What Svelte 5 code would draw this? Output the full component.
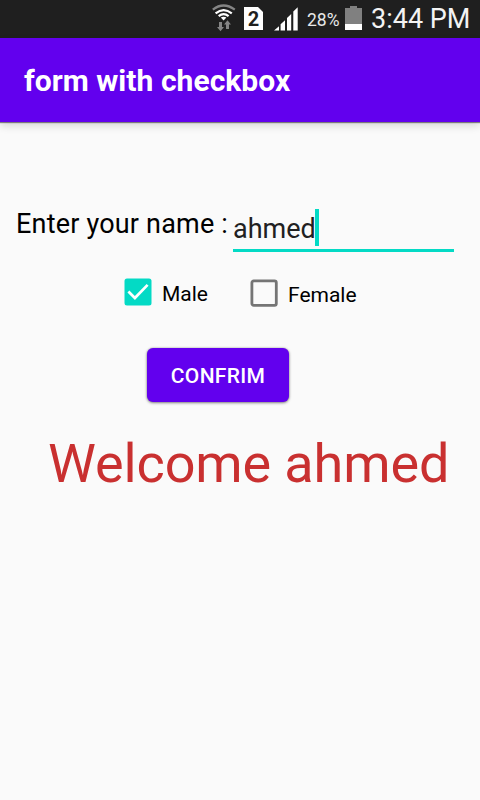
<script>
  let name = $state('ahmed');
  let options = $state([
    { label: 'Male', checked: true },
    { label: 'Female', checked: false },
  ]);
</script>

<div class="screen">
  <header class="status">
    <svg class="wifi" width="24" height="28" viewBox="0 0 24 28">
      <g fill="none" stroke-width="2.2">
        <path d="M.8 5.600Q11.500-2.600 22.800 5.600" stroke="#858585" />
        <path d="M3.600 9.300Q11.600 2.800 19.800 9.300" stroke="#fff" />
        <path d="M6.700 12.200Q11.600 8 16.600 12.200" stroke="#fff" />
      </g>
      <path d="M8.800 13.600Q11.600 11.700 14.400 13.600L11.600 16.400Z" fill="#fff" />
      <path d="M7 18h3v5h2l-3.500 4.200L5 23h2zM14 25v-4.500h-2l3.500-4.200 3.500 4.200h-2V25z" fill="#858585" />
    </svg>
    <span class="sim">2</span>
    <svg class="signal" width="25" height="24" viewBox="0 0 25 24" fill="#fff">
      <path d="M0 23.500L5 19.200V23.500ZM6.600 17.300l4.400-4.100v10.300H6.600zM13 11l4.200-4v16.500H13zM19.300 4.400l4.400-4.200v23.300h-4.400z" />
    </svg>
    <span class="percent">28%</span>
    <svg class="battery" width="17" height="24" viewBox="0 0 17 24">
      <path d="M5 0h7v2h5v16H0V2h5z" fill="#808080" />
      <path d="M0 18h17v6H0z" fill="#fff" />
    </svg>
    <span class="clock">3:44 PM</span>
  </header>

  <div class="appbar"><h1>form with checkbox</h1></div>

  <main>
    <div class="name-row">
      <span class="label">Enter your name :</span>
      <div class="field"><span>{name}</span><i class="caret"></i></div>
    </div>

    <div class="options">
      {#each options as option}
        <button class="option" class:checked={option.checked} onclick={() => (option.checked = !option.checked)}>
          <svg width="28" height="28" viewBox="0 0 28 28">
            {#if option.checked}
              <rect x=".5" y=".5" width="27" height="27" rx="2.500" fill="#03dac5" />
              <path d="M4.400 13.500l6.500 6.500L23.600 6.900" fill="none" stroke="#fff" stroke-width="2.700" />
            {:else}
              <rect x="1.900" y="1.900" width="24.400" height="24.400" rx="1.800" fill="none" stroke="#757575" stroke-width="2.800" />
            {/if}
          </svg>
          <span>{option.label}</span>
        </button>
      {/each}
    </div>

    <button class="confirm"><span>CONFRIM</span></button>
    <p class="welcome">Welcome {name}</p>
  </main>
</div>

<style>
  .screen {
    width: 480px;
    height: 800px;
    overflow: hidden;
    display: flex;
    flex-direction: column;
    background: #fafafa;
    color: #000;
    font-family: Roboto, "Liberation Sans", sans-serif;
    white-space: nowrap;
  }
  span { display: block; }
  svg { display: block; flex: none; }
  button { border: 0; margin: 0; font: inherit; color: inherit; }
  .status {
    height: 38px;
    flex: none;
    display: flex;
    align-items: flex-start;
    background: #1f1f1f;
    color: #fff;
  }
  .wifi { margin: 4px 0 0 212px; }
  .sim {
    width: 19px;
    height: 23px;
    margin: 7px 0 0 8px;
    background: #fff;
    color: #1f1f1f;
    clip-path: polygon(0 0, 14px 0, 19px 5px, 19px 100%, 0 100%);
    font: 700 20px/24px Roboto, sans-serif;
    text-align: center;
  }
  .signal { margin: 7px 0 0 11px; }
  .percent { width: 38px; margin-left: 8px; font-size: 17.5px; line-height: 40px; color: #e8e8e8; }
  .battery { margin-top: 6px; }
  .clock { margin-left: 9px; font-size: 27px; line-height: 39px; color: #f3f3f3; }
  .appbar {
    position: relative;
    height: 84px;
    flex: none;
    display: flex;
    align-items: center;
    padding: 1px 0 0 24px;
    box-sizing: border-box;
    background: #6200ee;
    box-shadow: 0 1px 1px rgba(0, 0, 0, .45), 0 4px 8px rgba(0, 0, 0, .14);
  }
  h1 { margin: 0; font-size: 30px; font-weight: 700; letter-spacing: .04px; color: #fff; }
  main { display: flex; flex-direction: column; align-items: flex-start; }
  .name-row { display: flex; margin: 82px 0 0 16px; }
  .label { width: 217px; font-size: 27px; line-height: 40px; letter-spacing: .19px; }
  .field {
    width: 221px;
    height: 48px;
    box-sizing: border-box;
    border-bottom: 3px solid #03dac5;
    display: flex;
    align-items: flex-start;
    font-size: 27px;
    line-height: 50px;
    color: #212121;
  }
  .caret { width: 4px; height: 37px; margin: 5px 0 0 -1px; background: #03dac5; }
  .options { display: flex; margin: 26px 0 0 124px; }
  .option {
    display: flex;
    align-items: flex-start;
    width: 126px;
    padding: 0;
    background: none;
    font-size: 21px;
    line-height: 32px;
  }
  .option:last-child { padding-top: 1px; }
  .option span { margin-left: 10px; }
  .confirm {
    width: 142px;
    height: 54px;
    margin: 37px 0 0 147px;
    padding: 0;
    border-radius: 6px;
    background: #6200ee;
    color: #fff;
    font-size: 21px;
    font-weight: 500;
    letter-spacing: .3px;
    line-height: 56px;
    text-align: center;
    box-shadow: 0 1px 3px rgba(0, 0, 0, .45), 0 0 2px rgba(0, 0, 0, .25);
  }
  .welcome { margin: 31px 0 0 48px; font-size: 54px; line-height: 62px; letter-spacing: -.12px; color: #c93030; }
</style>
